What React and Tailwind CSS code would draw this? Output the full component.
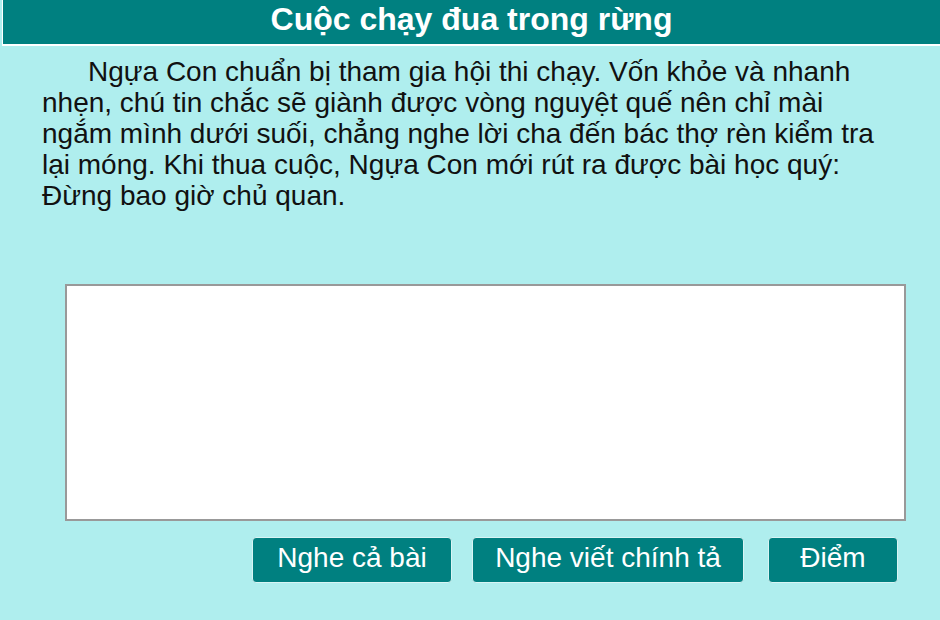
export default function App() {
  return (
    <div
      className="w-[940px] h-[620px] overflow-hidden bg-[#afeeee]"
      style={{ fontFamily: '"Liberation Sans", Arial, sans-serif' }}
    >
      {/* title bar */}
      <div className="pl-[2px]">
        <div className="h-[46px] bg-[#008080] border-l border-b-2 border-white flex items-center justify-center">
          <h1 className="text-[32px] font-bold text-white leading-none pb-[6px]">Cuộc chạy đua trong rừng</h1>
        </div>
      </div>

      {/* story */}
      <p className="pl-[42px] pr-[50px] pt-[10px] text-[28px] leading-[31px] text-[#111] indent-[46px]">
        Ngựa Con chuẩn bị tham gia hội thi chạy. Vốn khỏe và nhanh nhẹn, chú tin chắc sẽ giành được vòng nguyệt quế nên chỉ mài ngắm mình dưới suối, chẳng nghe lời cha đến bác thợ rèn kiểm tra lại móng. Khi thua cuộc, Ngựa Con mới rút ra được bài học quý: Đừng bao giờ chủ quan.
      </p>

      {/* dictation input */}
      <div className="pl-[65px] pt-[73px]">
        <textarea className="block w-[841px] h-[237px] bg-white border-2 border-[#999] resize-none outline-none" />
      </div>

      {/* actions */}
      <div className="flex pl-[252px] pt-[16px]">
        <button className="w-[200px] h-[46px] pb-[5px] bg-[#008080] text-white text-[28px] leading-none rounded-[4px] border border-[#d8f4f4]">
          Nghe cả bài
        </button>
        <button className="ml-[20px] w-[272px] h-[46px] pb-[5px] bg-[#008080] text-white text-[28px] leading-none rounded-[4px] border border-[#d8f4f4]">
          Nghe viết chính tả
        </button>
        <button className="ml-[24px] w-[130px] h-[46px] pb-[5px] bg-[#008080] text-white text-[28px] leading-none rounded-[4px] border border-[#d8f4f4]">
          Điểm
        </button>
      </div>
    </div>
  );
}
